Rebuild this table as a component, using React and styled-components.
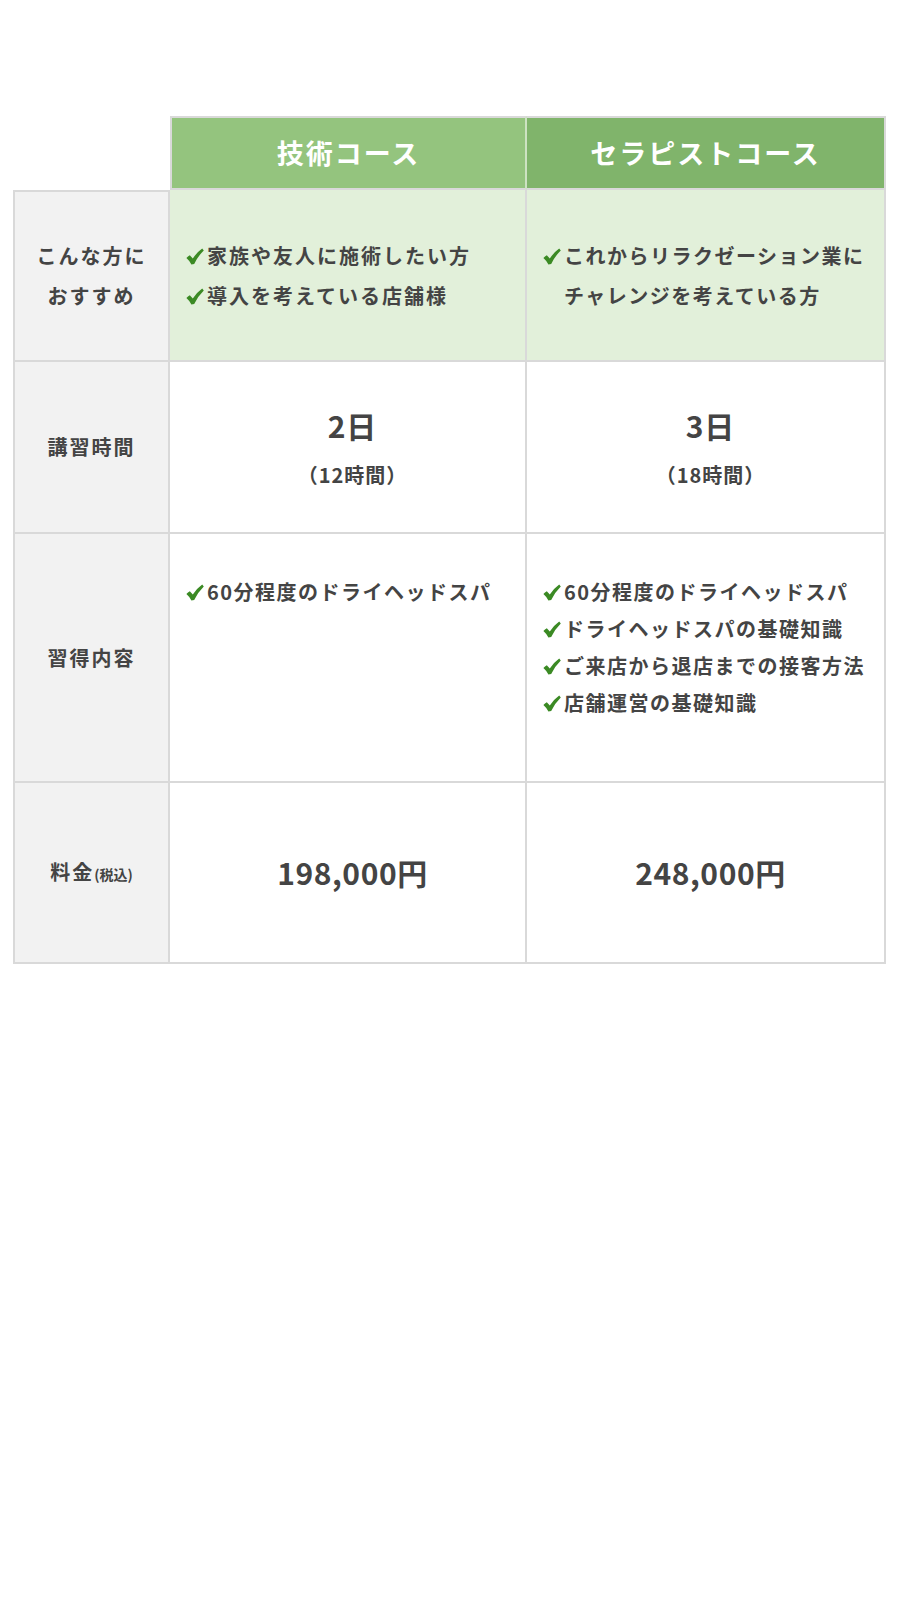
import React from "react";
import styled, { createGlobalStyle } from "styled-components";

const Global = createGlobalStyle`
  html, body { margin: 0; padding: 0; background: #fff; }
  body { font-family: "Noto Sans CJK JP", "Noto Sans", sans-serif; color: #444; }
`;

const Page = styled.div`
  padding: 116px 0 0 13px;
  width: 900px;
  height: 1600px;
  box-sizing: border-box;
`;

const Grid = styled.div`
  display: grid;
  grid-template-columns: 157px 357px 359px;
  grid-template-rows: 74px 172px 172px 249px 181px;
  font-weight: 700;
`;

const Corner = styled.div`
  background: #fff;
`;

const BaseCell = styled.div`
  box-sizing: border-box;
  border-right: 2px solid #d9d9d9;
  border-bottom: 2px solid #d9d9d9;
  display: flex;
  flex-direction: column;
`;

const HeadCell = styled(BaseCell)`
  background: ${(p) => p.$bg};
  border-top: 2px solid #d9d9d9;
  ${(p) => (p.$first ? "border-left: 2px solid #d9d9d9; border-right-color: #cde2c2;" : "")}
  color: #fff;
  font-size: 27px;
  letter-spacing: 2px;
  align-items: center;
  justify-content: center;
  padding-bottom: 2px;
`;

const Label = styled(BaseCell)`
  background: #f2f2f2;
  border-left: 2px solid #d9d9d9;
  ${(p) => (p.$first ? "border-top: 2px solid #d9d9d9;" : "")}
  font-size: 20px;
  line-height: 40px;
  letter-spacing: 2px;
  color: #444;
  text-align: center;
  align-items: center;
  justify-content: center;
`;

const Small = styled.span`
  font-size: 14px;
  letter-spacing: 0;
`;

const Cell = styled(BaseCell)`
  background: ${(p) => (p.$green ? "#e2f0da" : "#fff")};
  padding: ${(p) => (p.$top ? "37px 6px 0 16px" : "0 6px 0 16px")};
  justify-content: ${(p) => (p.$top ? "flex-start" : "center")};
  align-items: ${(p) => (p.$center ? "center" : "stretch")};
  text-align: ${(p) => (p.$center ? "center" : "left")};
`;

const List = styled.ul`
  list-style: none;
  margin: 0;
  padding: 2px 0 0 0;
`;

const Item = styled.li`
  position: relative;
  font-size: 20px;
  line-height: ${(p) => p.$lh || 40}px;
  letter-spacing: ${(p) => (p.$wide ? 2 : 1.5)}px;
  padding-left: 21px;
  color: #444;
`;

const CheckIcon = styled.svg`
  position: absolute;
  left: 0;
  top: ${(p) => (p.$lh || 40) / 2 - 8}px;
  width: 18px;
  height: 17px;
  fill: #3b8a24;
`;

const Big = styled.div`
  font-size: 30px;
  line-height: 36px;
  letter-spacing: 1px;
  color: #444;
`;

const Sub = styled.div`
  margin-top: 19px;
  font-size: 20px;
  line-height: 26px;
  letter-spacing: 1px;
  color: #444;
`;

const Price = styled.div`
  font-size: 30px;
  letter-spacing: 0.6px;
  color: #444;
  padding-bottom: 2px;
`;

const Bullet = ({ children, lh, wide }) => (
  <Item $lh={lh} $wide={wide}>
    <CheckIcon $lh={lh} viewBox="0 0 18 17" aria-hidden="true">
      <path d="M0.4 10 Q1.9 8.2 3.8 7.2 L6.8 10.6 Q10.4 4.8 16.2 0.6 L17.8 2.4 Q12 8 8.2 16 L5.4 16.4 Q3.4 12.6 0.4 10 Z" />
    </CheckIcon>
    {children}
  </Item>
);

export default function App() {
  return (
    <Page>
      <Global />
      <Grid>
        <Corner />
        <HeadCell $bg="#94c47e" $first>
          技術コース
        </HeadCell>
        <HeadCell $bg="#80b46b">セラピストコース</HeadCell>

        <Label $first>
          <div>
            こんな方に
            <br />
            おすすめ
          </div>
        </Label>
        <Cell $green>
          <List>
            <Bullet wide>家族や友人に施術したい方</Bullet>
            <Bullet wide>導入を考えている店舗様</Bullet>
          </List>
        </Cell>
        <Cell $green>
          <List>
            <Bullet>
              これからリラクゼーション業に
              <br />
              チャレンジを考えている方
            </Bullet>
          </List>
        </Cell>

        <Label>講習時間</Label>
        <Cell $center>
          <Big>2日</Big>
          <Sub>（12時間）</Sub>
        </Cell>
        <Cell $center>
          <Big>3日</Big>
          <Sub>（18時間）</Sub>
        </Cell>

        <Label>習得内容</Label>
        <Cell $top>
          <List>
            <Bullet lh={37}>60分程度のドライヘッドスパ</Bullet>
          </List>
        </Cell>
        <Cell $top>
          <List>
            <Bullet lh={37}>60分程度のドライヘッドスパ</Bullet>
            <Bullet lh={37}>ドライヘッドスパの基礎知識</Bullet>
            <Bullet lh={37}>ご来店から退店までの接客方法</Bullet>
            <Bullet lh={37}>店舗運営の基礎知識</Bullet>
          </List>
        </Cell>

        <Label>
          <div>
            料金<Small>(税込)</Small>
          </div>
        </Label>
        <Cell $center>
          <Price>198,000円</Price>
        </Cell>
        <Cell $center>
          <Price>248,000円</Price>
        </Cell>
      </Grid>
    </Page>
  );
}
